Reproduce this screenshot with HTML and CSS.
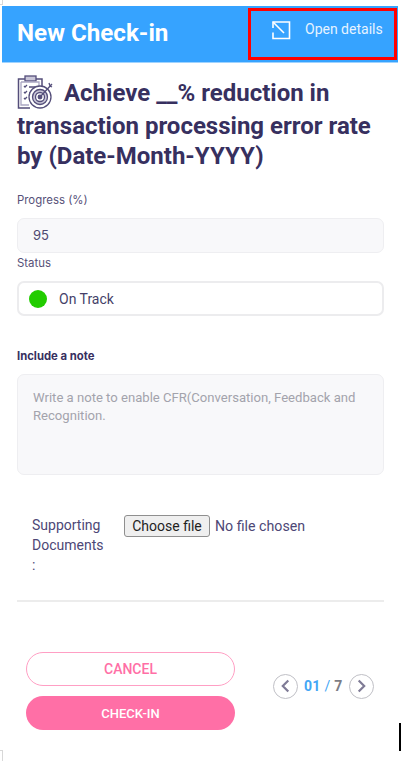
FILE: index.html
```html
<!DOCTYPE html>
<html lang="en">
<head>
<meta charset="utf-8">
<title>New Check-in</title>
<link rel="stylesheet" href="styles.css">
</head>
<body>
<div class="corner-top"></div>
<header class="topbar">
  <h1 class="topbar-title">New Check-in</h1>
  <a class="open-details">
    <svg class="open-icon" viewBox="0 0 20 20" width="20" height="20" fill="none" stroke="#fff" stroke-width="1.6">
      <path d="M2 8V2H18.5V18.5H2V12.5"/>
      <path d="M2 2L13 13"/>
    </svg>
    <span>Open details</span>
  </a>
</header>
<main class="content">
  <h2 class="goal">
    <svg class="goal-icon" viewBox="0 0 36 36" width="36" height="36" fill="none" stroke="#544e7a" stroke-width="1.3">
      <path d="M5 4H25V13M13 33H1.5V4H5" stroke-width="1.5"/>
      <rect x="8" y="1" width="11" height="5" fill="#c9c6d8"/>
      <path d="M4 7H22V12M12 30H4V7" stroke="#aaa6c2"/>
      <path d="M7 11l1 1 2-2M7 17l1 1 2-2M7 23l1 1 2-2M12 12h6M12 18h2M12 24h2"/>
      <circle cx="23" cy="22" r="11" fill="#fff"/>
      <circle cx="23" cy="22" r="7.5" fill="#c9c6d8"/>
      <circle cx="23" cy="22" r="4.5" fill="#fff"/>
      <circle cx="23" cy="22" r="1.8" fill="#544e7a"/>
      <path d="M23 22L35 9M32 8l1 3 2 1" />
    </svg>
    <span>Achieve __% reduction in transaction processing error rate by (Date-Month-YYYY)</span>
  </h2>

  <label class="field-label first">Progress (%)</label>
  <div class="value-box muted">95</div>

  <label class="field-label status-label">Status</label>
  <div class="status-box">
    <span class="status-dot"></span>
    <span>On Track</span>
  </div>

  <label class="note-label">Include a note</label>
  <div class="note-box">Write a note to enable CFR(Conversation, Feedback and Recognition.</div>

  <div class="docs">
    <div class="docs-label">Supporting Documents :</div>
    <button class="file-btn" type="button">Choose file</button>
    <span class="file-name">No file chosen</span>
  </div>

  <hr class="divider">

  <div class="footer-row">
    <div class="actions">
      <button class="btn btn-cancel" type="button">CANCEL</button>
      <button class="btn btn-checkin" type="button">CHECK-IN</button>
    </div>
    <div class="pager">
      <span class="pager-btn">
        <svg viewBox="0 0 24 24" width="22" height="22" fill="none" stroke="#7f7b96" stroke-width="2.4"><path d="M14.5 6l-6 6 6 6"/></svg>
      </span>
      <span class="pager-text"><b class="pager-current">01 <i class="pager-slash">/</i></b> 7</span>
      <span class="pager-btn">
        <svg viewBox="0 0 24 24" width="22" height="22" fill="none" stroke="#7f7b96" stroke-width="2.4"><path d="M9.5 6l6 6-6 6"/></svg>
      </span>
    </div>
  </div>
</main>
<div class="cursor-line"></div>
<div class="corner-bottom"></div>
</body>
</html>
```

FILE: styles.css
```css
* { box-sizing: border-box; }
html, body { margin: 0; padding: 0; background: #fff; }
body {
  width: 405px;
  height: 761px;
  overflow: hidden;
  padding-top: 6px;
  font-family: "Roboto", sans-serif;
  color: #37305f;
  position: relative;
}
.topbar {
  margin: 0 7px 0 2px;
  height: 57px;
  background: #36a3ff;
  border-bottom: 1px solid #9fd3ff;
  display: flex;
  align-items: flex-start;
  justify-content: space-between;
  color: #fff;
}
.topbar-title {
  margin: 14px 0 0 15px;
  font-size: 24.2px;
  line-height: 26px;
  font-weight: 700;
}
.open-details {
  width: 149px;
  height: 52px;
  margin-top: 2px;
  margin-right: 1px;
  border: 3px solid #f00;
  display: flex;
  align-items: flex-start;
  font-size: 14px;
  padding: 8px 0 0 20px;
  color: #e6f3ff;
}
.open-details span { margin: 0 0 0 14px; line-height: 20px; }
.open-icon { flex: none; margin-top: 1px; }
.content { padding: 0 21px 0 17px; }
.goal {
  margin: 12px 0 0;
  font-size: 24px;
  line-height: 30px;
  font-weight: 700;
  color: #37305f;
}
.goal-icon { vertical-align: -10px; margin-right: 5px; }
.field-label {
  display: block;
  font-family: "Inter", sans-serif;
  font-size: 11.4px;
  line-height: 16px;
  color: #565078;
}
.field-label.first { margin-top: 21px; }
.value-box {
  margin-top: 10px;
  height: 35px;
  background: #f8f8fa;
  border: 1px solid #eeeef1;
  border-radius: 7px;
  padding-left: 15px;
  font-family: "Inter", sans-serif;
  font-size: 13px;
  line-height: 33px;
  color: #4e4870;
}
.status-label { margin-top: 2px; }
.status-box {
  margin-top: 10px;
  height: 35px;
  border: 2px solid #ececee;
  border-radius: 7px;
  display: flex;
  align-items: center;
  padding-left: 10px;
  font-size: 14px;
  color: #453f69;
}
.status-dot {
  width: 18px;
  height: 18px;
  border-radius: 50%;
  background: #22cc00;
  margin-right: 12px;
}
.note-label {
  display: block;
  margin-top: 33px;
  font-family: "Inter", sans-serif;
  font-size: 11.3px;
  line-height: 14px;
  font-weight: 700;
  color: #37305f;
}
.note-box {
  margin-top: 11px;
  height: 101px;
  background: #f8f8fa;
  border: 1px solid #eeeef1;
  border-radius: 7px;
  padding: 14px 15px;
  font-size: 13.1px;
  line-height: 17.5px;
  color: #a3a3ac;
}
.docs {
  display: flex;
  align-items: flex-start;
  margin-top: 40px;
  padding-left: 15px;
  height: 85px;
  font-size: 14px;
  line-height: 20px;
  color: #4d4776;
}
.docs-label { width: 77px; }
.file-btn {
  margin: 0 5px 0 15px;
  width: 86px;
  height: 22px;
  padding: 0;
  background: #efefef;
  border: 1px solid #8f8f8f;
  border-radius: 3px;
  font-family: "Roboto", sans-serif;
  font-size: 14px;
  color: #1f1f1f;
}
.file-name { font-size: 14.2px; line-height: 22px; }
.divider {
  margin: 0;
  border: 0;
  border-top: 2px solid #ececec;
}
.footer-row {
  display: flex;
  align-items: center;
  margin-top: 50px;
  padding-left: 9px;
}
.actions {
  width: 209px;
  display: flex;
  flex-direction: column;
  gap: 10px;
}
.btn {
  height: 34px;
  border-radius: 17px;
  font-family: "Roboto", sans-serif;
  font-weight: 500;
  padding: 0;
}
.btn-cancel {
  background: #fff;
  border: 1px solid #ff9fc4;
  color: #ff6fa6;
  font-size: 14px;
}
.btn-checkin {
  background: #ff6fa6;
  border: 0;
  color: #fff;
  font-size: 13px;
}
.pager {
  display: flex;
  align-items: center;
  margin-left: 38px;
  margin-bottom: 10px;
  gap: 6px;
}
.pager-btn {
  width: 25px;
  height: 25px;
  border: 1px solid #c0c0c6;
  border-radius: 50%;
  display: flex;
  align-items: center;
  justify-content: center;
}
.pager-text { font-size: 14px; font-weight: 700; color: #7d7d85; letter-spacing: .3px; }
.pager-current { color: #43a6f5; font-weight: 700; }
.pager-slash { font-style: normal; font-weight: 400; }
.corner-top {
  position: absolute;
  left: 0; top: 0;
  width: 3px; height: 5px;
  border: solid #d8d8d8;
  border-width: 0 1px 1px 0;
}
.corner-bottom {
  position: absolute;
  left: 0; top: 750px;
  width: 3px; height: 11px;
  border: solid #d8d8d8;
  border-width: 1px 1px 0 0;
}
.cursor-line {
  position: absolute;
  left: 399px; top: 723px;
  width: 2px; height: 28px;
  background: #000;
}
```
